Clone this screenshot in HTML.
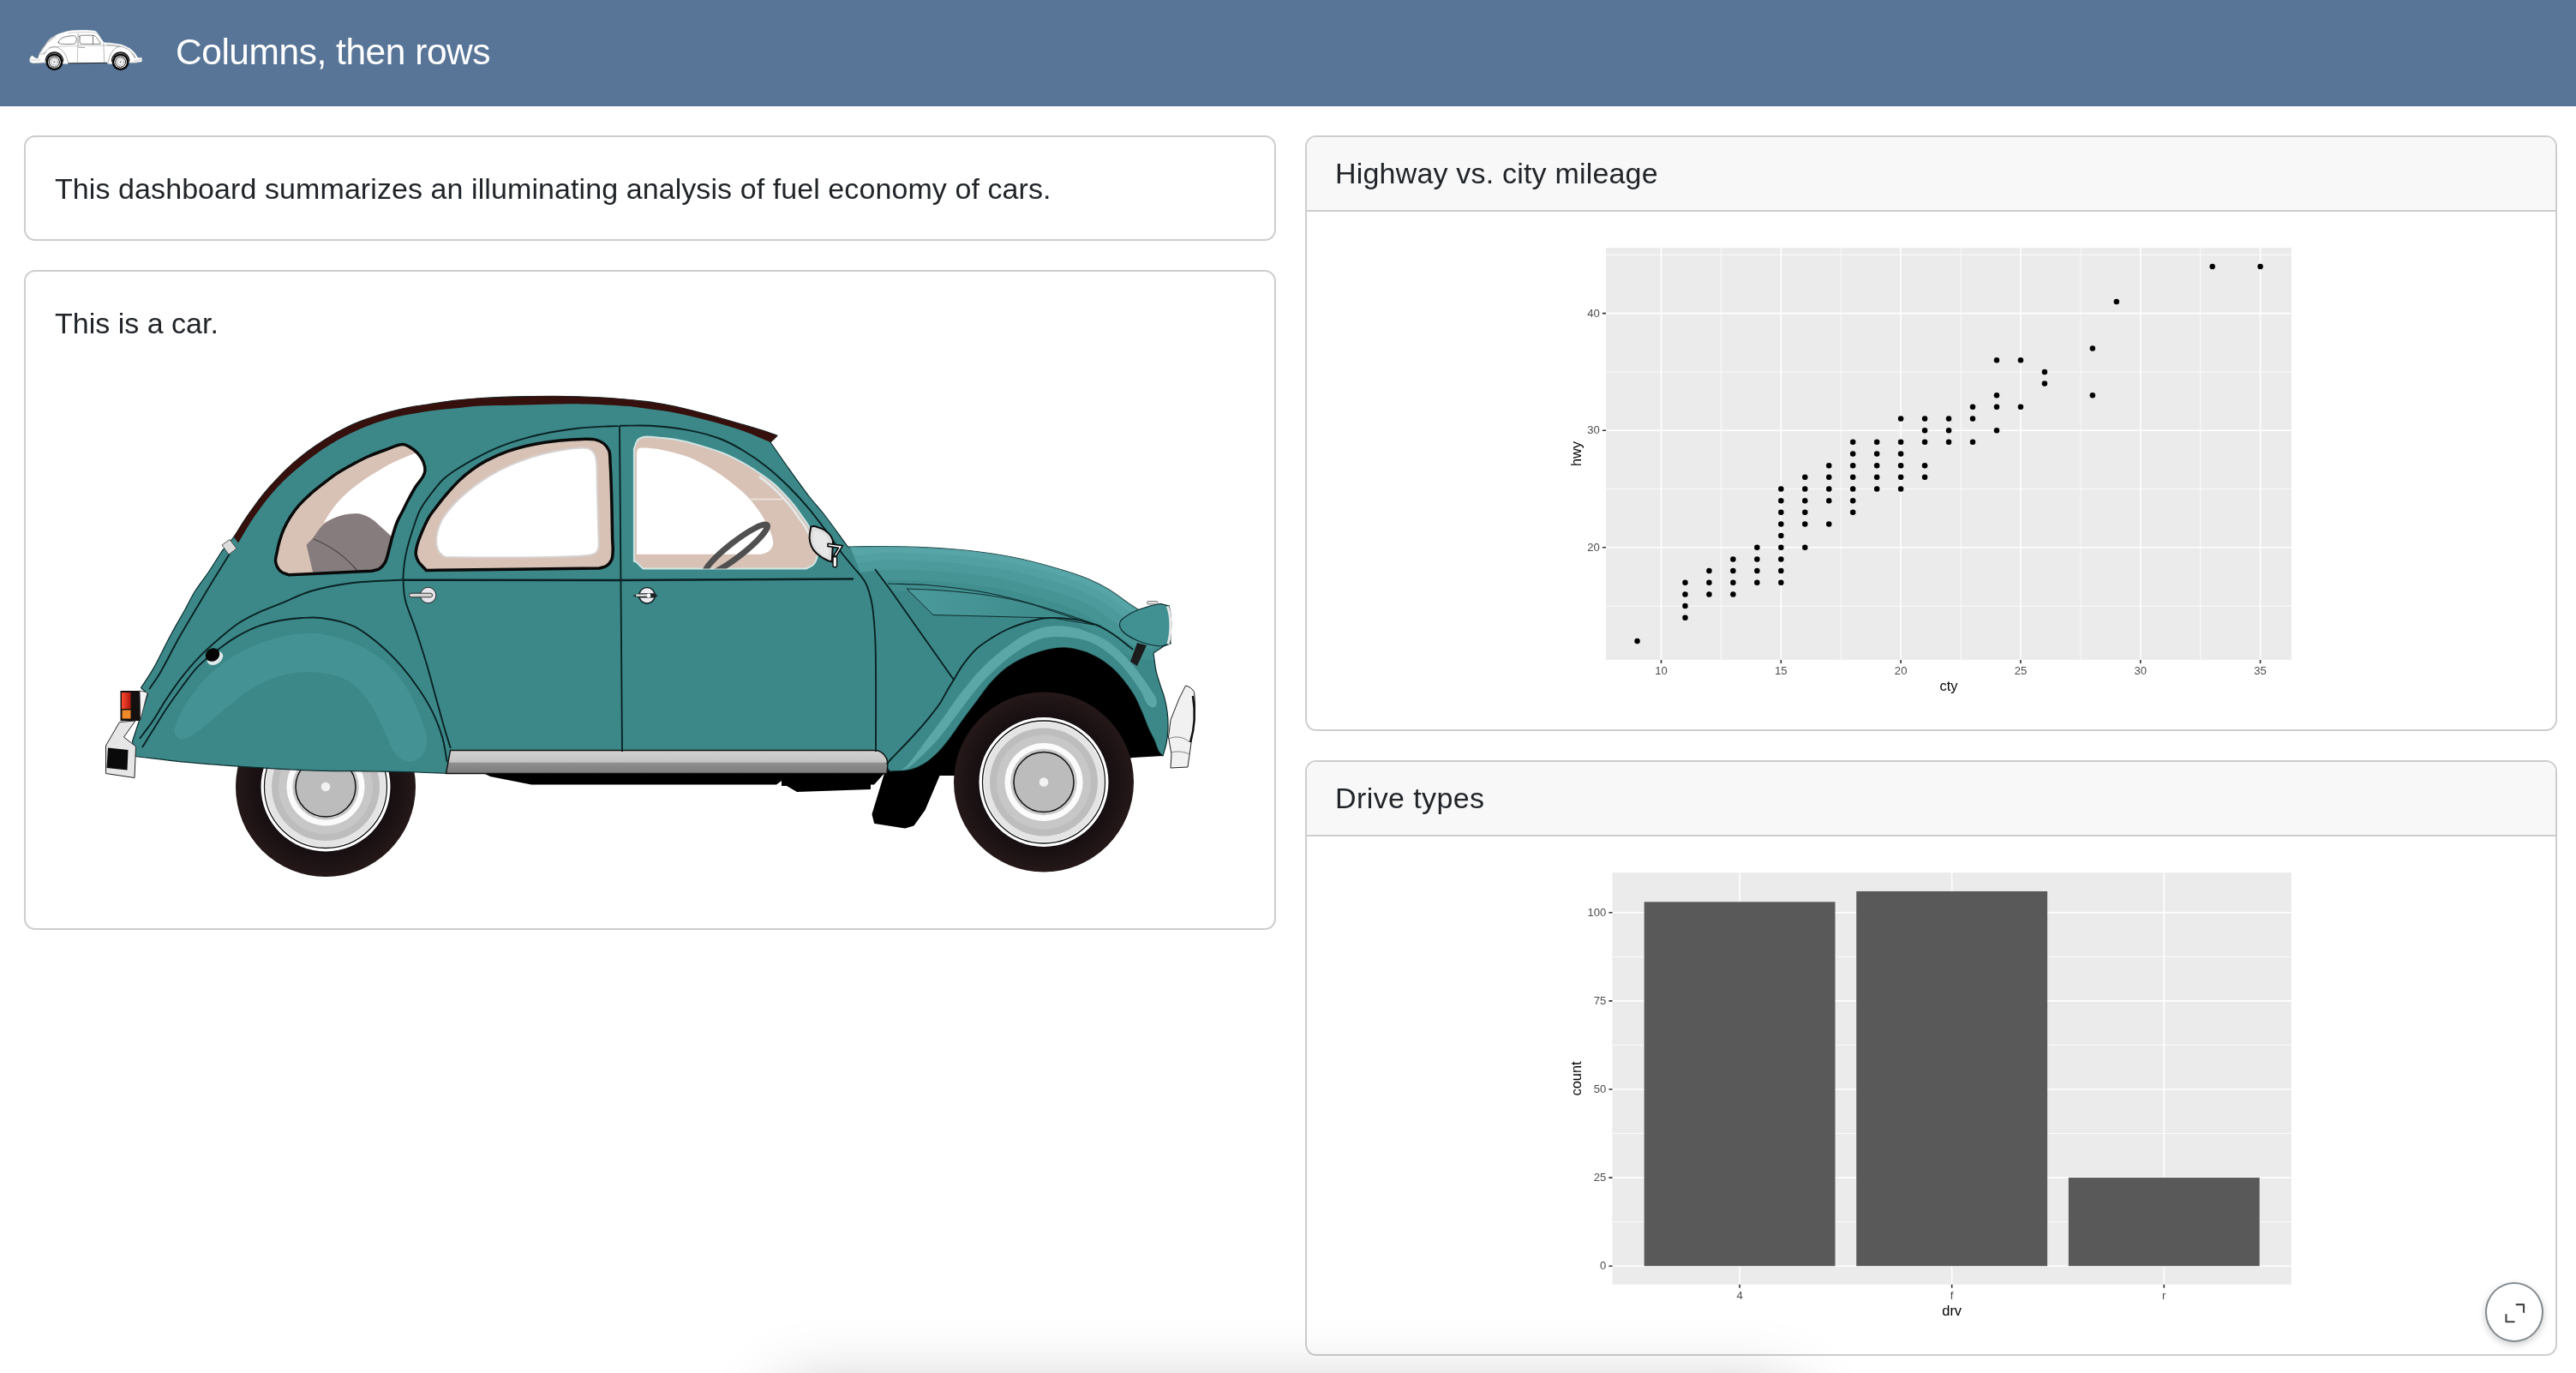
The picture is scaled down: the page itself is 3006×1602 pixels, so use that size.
<!DOCTYPE html>
<html lang="en">
<head>
<meta charset="utf-8">
<title>Columns, then rows</title>
<style>
html,body{margin:0;padding:0;}
body{width:3006px;height:1602px;overflow:hidden;background:#fff;position:relative;font-family:"Liberation Sans",sans-serif;color:#212529;}
#nav{position:absolute;left:0;top:0;width:3006px;height:123.6px;background:#587597;box-shadow:inset 0 -1px 0 #4e6d93;}
#logo{position:absolute;left:24px;top:24px;}
#title{position:absolute;left:204.5px;top:34.5px;font-size:42.5px;line-height:52px;color:#fff;white-space:nowrap;letter-spacing:-0.47px;}
.card{position:absolute;box-sizing:border-box;border:2px solid #cdcdcd;border-radius:13px;background:#fff;overflow:hidden;}
.card p{margin:0;position:absolute;white-space:nowrap;font-size:34px;line-height:40px;}
#c1{left:28px;top:158px;width:1461px;height:123px;}
#c2{left:28px;top:315px;width:1461px;height:770px;}
#c3{left:1523px;top:158px;width:1461px;height:695px;}
#c4{left:1523px;top:887px;width:1461px;height:695px;}
#t1{left:34px;top:40px;letter-spacing:0.08px;}
#t2{left:34px;top:40px;}
.card-header{position:absolute;left:0;top:0;right:0;height:85px;background:#f8f8f8;border-bottom:2px solid #cdcdcd;}
.card-header span{position:absolute;left:33px;top:22px;font-size:34px;line-height:40px;white-space:nowrap;}
#t3{letter-spacing:0.19px;}
#t4{letter-spacing:0.4px;}
#car{position:absolute;left:100px;top:440px;}
#plots{position:absolute;left:1800px;top:260px;}
#expand{position:absolute;left:2899.75px;top:1496.1px;width:64.5px;height:65.8px;border:2px solid #82898e;border-radius:50%;background:#fff;box-shadow:0 3px 9px rgba(0,0,0,.2);}
#expand svg{position:absolute;left:0;top:0;}
#shadow{position:absolute;left:915px;top:1628px;width:1176px;height:80px;box-shadow:0 0 80px 6px rgba(0,0,0,.26);border-radius:24px;}

#plots,#title,#t1,#t2,#t3,#t4{will-change:transform;}

</style>
</head>
<body>
<header id="nav">
<svg id="logo" viewBox="0 0 160 80" width="160" height="80">
<g transform="scale(0.06211)" stroke-linejoin="round" stroke-linecap="round">
<path d="M165 745C171.7 726.7 175.6 704.8 185 690C193 677.4 204 661.5 215 660C225.7 658.6 239.6 672.6 250 680C259.4 686.7 264.1 697 275 702C289.1 708.5 311.7 707.3 330 710C335 686.7 335.6 664.3 345 640C356.6 609.9 381.6 574.5 400 545C416.6 518.2 433.1 494.4 450 470C466.5 446.1 480.9 422.6 500 400C520.5 375.8 544.7 350.2 570 330C594.7 310.3 623.9 294.6 650 280C673.8 266.7 695.5 254.9 720 245C745.4 234.8 771.7 227.9 800 220C831.4 211.2 866.5 201.3 900 195C933.2 188.7 966.6 185.2 1000 182C1033.3 178.8 1066.7 177 1100 176C1133.3 175 1166.7 175.3 1200 176C1233.3 176.7 1268.6 177.4 1300 180C1328.2 182.3 1358.2 184.6 1380 190C1395.9 193.9 1408.5 196.9 1420 205C1432 213.4 1439.7 226.4 1450 240C1462.9 257 1476.7 280 1490 300C1503.3 320 1517.4 342.2 1530 360C1540.5 374.8 1548.6 391.3 1560 400C1569.1 407 1578 409.4 1590 412C1606.3 415.6 1627.5 413.3 1650 415C1679.1 417.2 1716.7 420.8 1750 425C1783.4 429.2 1816.9 432.6 1850 440C1883.6 447.5 1917.2 457 1950 470C1983.9 483.5 2020.7 500.5 2050 520C2076.6 537.7 2099.4 559.1 2120 580C2139 599.2 2156.1 620.4 2170 640C2182 657 2190 673.3 2200 690C2210 694 2219.2 701.5 2230 702C2242.3 702.5 2256.7 694 2270 690C2275 706.7 2284.1 725.4 2285 740C2285.7 751.2 2281.7 760 2280 770C2253.3 776.7 2226.9 785.7 2200 790C2173.5 794.3 2144.8 795.9 2120 796C2098.6 796.1 2080 793.3 2060 792C1928.3 800.7 1796.7 809.3 1665 818C1656.7 816 1647.4 816.1 1640 812C1632.3 807.7 1626.7 798.7 1620 792C1381.7 794.7 1143.3 797.3 905 800C898.3 806 891.7 812 885 818C740 809.3 595 800.7 450 792C433.3 793.3 421.1 794.4 400 796C363.4 798.7 290.3 810.3 250 806C222 803 203.3 792.7 180 786C175 772.3 170 758.7 165 745Z" fill="#fff" stroke="#9aa" stroke-width="5"/>
<path d="M905 803L1620 795" stroke="#111" stroke-width="14" fill="none"/>
<path d="M250 800L440 790M2080 792L2230 782" stroke="#999" stroke-width="10" fill="none"/>
<path d="M460 760A175 175 0 0 1 810 760L795 775A160 160 0 0 0 475 775Z" fill="#222"/>
<path d="M1703 760A175 175 0 0 1 2053 760L2038 775A160 160 0 0 0 1718 775Z" fill="#222"/>
<path d="M710 412C709.3 397.5 737.6 358.2 760 340C783.6 320.8 818.6 310.8 850 302C881.9 293 919.6 288.6 950 287C975.3 285.7 1003.6 281.9 1020 290C1032.2 296 1039.9 307.7 1045 320C1050.9 334.2 1052.2 354.6 1050 372C1047.7 390.6 1044.1 416.2 1030 428C1013.5 441.7 980.9 438.5 950 441C907.9 444.4 841.7 445 800 441C769.6 438.1 736.1 434.2 722 426C715.2 422.1 710.3 418.7 710 412Z" fill="#fff" stroke="#222" stroke-width="9"/>
<path d="M1112 300C1118 292.3 1124 284.7 1130 277C1206.7 277 1283.3 277 1360 277C1373.3 281.3 1387.1 281.3 1400 290C1417.5 301.9 1433.7 328.9 1450 350C1467.1 372.1 1483.3 396.7 1500 420C1500 427 1500 434 1500 441C1377.3 441 1254.7 441 1132 441C1125.3 427.3 1118.7 413.7 1112 400C1112 366.7 1112 333.3 1112 300Z" fill="#fff" stroke="#222" stroke-width="9"/>
<path d="M1360 280V440" stroke="#222" stroke-width="10" fill="none"/>
<path d="M1078 245L1068 800M1095 250L1088 470" stroke="#777" stroke-width="7" fill="none"/>
<path d="M1560 420L1572 780" stroke="#555" stroke-width="7" fill="none"/>
<path d="M1090 502L1200 507" stroke="#666" stroke-width="10" fill="none"/>
<path d="M540 505C700 485 900 478 1070 478M1095 472L1560 470C1650 470 1750 475 1830 490" stroke="#777" stroke-width="6" fill="none"/>
<path d="M900 240C1000 215 1200 210 1380 225L1440 250" stroke="#888" stroke-width="6" fill="none"/>
<path d="M430 640C470 560 540 505 620 495C710 490 790 550 840 640C870 700 890 760 898 812" stroke="#444" stroke-width="7" fill="none"/>
<path d="M1640 805C1650 720 1690 620 1750 550C1790 510 1830 490 1870 485M1620 455C1750 455 1900 480 2000 530C2080 580 2130 640 2160 700" stroke="#444" stroke-width="7" fill="none"/>
<path d="M640 290L370 545M660 300L520 400M500 410L380 600M350 640L480 600" stroke="#777" stroke-width="7" fill="none"/>
<path d="M2085 610C2110 630 2135 670 2140 700" stroke="#555" stroke-width="8" fill="none"/>
<path d="M190 745L370 740M2140 750L2275 735" stroke="#888" stroke-width="7" fill="none"/>
<circle cx="635" cy="778" r="160" fill="#050505"/>
<circle cx="635" cy="778" r="119" fill="#f4f4f4"/>
<circle cx="635" cy="778" r="97" fill="none" stroke="#111" stroke-width="15"/>
<circle cx="635" cy="778" r="62" fill="none" stroke="#555" stroke-width="6"/>
<circle cx="635" cy="778" r="14" fill="#666"/>
<circle cx="1878" cy="778" r="160" fill="#050505"/>
<circle cx="1878" cy="778" r="119" fill="#f4f4f4"/>
<circle cx="1878" cy="778" r="97" fill="none" stroke="#111" stroke-width="15"/>
<circle cx="1878" cy="778" r="62" fill="none" stroke="#555" stroke-width="6"/>
<circle cx="1878" cy="778" r="14" fill="#666"/>
</g>
</svg>
<div id="title">Columns, then rows</div>
</header>
<main>
<section class="card" id="c1"><p id="t1">This dashboard summarizes an illuminating analysis of fuel economy of cars.</p></section>
<section class="card" id="c2"><p id="t2">This is a car.</p></section>
<section class="card" id="c3"><div class="card-header"><span id="t3">Highway vs. city mileage</span></div></section>
<section class="card" id="c4"><div class="card-header"><span id="t4">Drive types</span></div></section>
<svg id="car" viewBox="100 440 1320 600" width="1320" height="600">
<defs>
<linearGradient id="gsill" x1="0" y1="0" x2="0" y2="1"><stop offset="0" stop-color="#d2d2d2"/><stop offset="0.5" stop-color="#c4c4c4"/><stop offset="0.56" stop-color="#8e8e8e"/><stop offset="1" stop-color="#7c7c7c"/></linearGradient>
<linearGradient id="gtail" x1="0" y1="0" x2="1" y2="0"><stop offset="0" stop-color="#ff4a30"/><stop offset="1" stop-color="#b01810"/></linearGradient>
<g id="hub">
<circle r="75.500" fill="#fff"/>
<circle r="71.500" fill="none" stroke="#111" stroke-width="1.300"/>
<circle r="70" fill="#e4e4e4"/>
<circle r="63" fill="#bdbdbd"/>
<circle r="55" fill="#c7c7c7"/>
<circle r="45.500" fill="#fbfbfb"/>
<circle r="38.800" fill="#c9c9c9"/>
<circle r="35" fill="#bcbcbc" stroke="#111" stroke-width="1.500"/>
<circle r="5.300" fill="#f2f2f2"/>
</g>
<radialGradient id="gtire"><stop offset="0.7" stop-color="#150e10"/><stop offset="1" stop-color="#251819"/></radialGradient>
<linearGradient id="gpan" x1="0" y1="0" x2="1" y2="0"><stop offset="0" stop-color="#4b9a9b"/><stop offset="1" stop-color="#3b8788"/></linearGradient>
</defs>
<circle cx="380" cy="918" r="105" fill="url(#gtire)"/>
<use href="#hub" x="380" y="918"/>
<path d="M560 900H1034L1020 915.500H1016V921L930 924L918 917H912V911L906 915.500H620L572 906Z" fill="#000"/>
<path d="M1034 899L1098 899L1078.500 945L1066 962.500L1056 965.500L1021 960L1018.500 950Z" fill="#000" stroke="#000" stroke-width="2" stroke-linejoin="round"/>
<path d="M259 643C263.6 637.5 268.5 632.4 272.8 626.5C277.2 620.5 280.9 613.5 285 607.3C289 601.3 293.1 595.4 297.3 589.8C301.3 584.4 305.2 579.2 309.5 574C313.9 568.7 318.9 563.2 323.5 558.4C327.7 554 331.4 550.1 335.7 546.1C340.1 541.9 344.7 537.9 349.7 533.9C355.1 529.5 361.3 524.9 367.2 520.8C373 516.8 378.8 512.9 384.7 509.4C390.4 505.9 396.2 502.7 402.1 499.8C407.9 496.9 413.7 494.2 419.6 491.9C425.4 489.6 431.2 487.7 437.1 485.8C442.9 483.9 448.4 482.3 454.6 480.6C461.6 478.7 469.7 476.8 477.3 475.3C484.8 473.8 491.9 473 500 471.8C509.3 470.4 519.8 468.5 530 467.3C540.5 466.1 550.1 465.2 562 464.5C576.8 463.6 595.3 463 612 462.7C628.7 462.4 645.3 462.2 662 462.5C678.7 462.8 695.9 463.4 712 464.5C727.1 465.5 742.6 466.9 756 468.7C767.3 470.2 776.1 471.7 787 474C799.5 476.6 813.7 480.4 827 484C840.4 487.6 855 491.9 867 495.4C876.9 498.3 886.7 501.1 894 503.6C899.1 505.3 902.7 506.8 907 508.4L899 516C906.2 526.3 913.1 536.5 920.5 546.8C928.1 557.5 936.6 569.5 944 579C950.1 586.9 955.1 591.9 961.5 600C969.9 610.7 980.1 625.3 989.4 638C1003.3 637.8 1016.5 637.4 1031 637.5C1046.9 637.6 1064.3 637.9 1081 638.8C1097.7 639.6 1114.4 640.6 1131 642.5C1147.7 644.4 1164.4 646.7 1181 650C1197.7 653.3 1215.6 658 1231 662.5C1244.5 666.4 1257.4 670.4 1268.5 675C1277.8 678.9 1285.3 682.6 1293.5 687.5C1302 692.6 1311.4 700.2 1318.5 705C1323.7 708.5 1327.5 711 1332 714L1354 704.500L1364 707L1366 751L1358 754L1346 762C1347 769 1347.7 776.5 1349.1 782.9C1350.3 788.6 1352.1 793.4 1353.7 798.6C1355.3 803.9 1357.5 809 1358.9 814.4C1360.3 819.9 1361.5 825.5 1362.2 831.4C1362.9 837.7 1363.2 844.8 1362.9 851.1C1362.7 857 1362 862.8 1360.9 868.1C1359.9 873 1358.3 877.4 1357 882C1355.5 880.4 1353.8 879.4 1352.4 877.3C1350.3 874.2 1349 868.5 1347.1 864.2C1345.1 859.8 1342.8 856 1340.6 851.1C1338 845.2 1335.5 837.9 1332.7 831.4C1329.8 824.8 1327.1 817.9 1323.5 811.7C1320 805.7 1315.9 800 1311.7 794.7C1307.6 789.6 1303.4 784.7 1298.6 780.3C1293.8 775.9 1288.4 771.8 1282.9 768.5C1277.5 765.3 1271.9 762.7 1265.9 760.6C1259.7 758.5 1252.7 756.6 1246.2 756C1240.1 755.5 1234 756.1 1228 757C1222 757.9 1216.4 759.5 1210.4 761.5C1203.9 763.6 1197.1 766.2 1190.7 769.5C1184 772.9 1177 777.1 1171.1 781.9C1165.3 786.6 1160.4 791.9 1155.3 797.7C1149.8 804 1144.8 811.6 1139.6 818.6C1134.4 825.6 1129.1 832.5 1123.9 839.6C1118.6 846.9 1113.3 855.2 1108.2 861.9C1103.7 867.7 1099.8 872.8 1095 877.6C1090.2 882.4 1085 887.2 1079.3 890.7C1073.7 894.2 1067.6 897 1061 898.6C1054 900.3 1046 899.5 1038.5 900L1030 890H527L522 902.500C510.3 902 499.7 901.4 487 901C471.8 900.5 455.4 900.3 437 900C414.5 899.6 388 899.7 362 898.8C333.9 897.7 301.2 895.6 274.5 893.8C251.9 892.2 232.1 890.7 212 888.8C193.3 886.9 176 884.6 158 882.5L154.500 865C160.5 846.7 166.5 828.3 172.5 810C169.8 807.5 167.2 805.1 164.5 802.6C169.3 795.1 173.9 788.8 178.9 780.1C185.4 768.8 193.1 752.1 199.7 740C205.2 729.8 210.6 720.8 215.5 712C219.8 704.2 222.9 697.2 227.4 690C232 682.5 237.9 675.6 243 668C248.4 660 253.7 651.3 259 643Z" fill="#3c8889" stroke="#0d2d2f" stroke-width="1.200" stroke-linejoin="round"/>
<path d="M272.8 626.5C276.9 620.1 280.9 613.5 285 607.3C289 601.3 293.1 595.4 297.3 589.8C301.3 584.4 305.2 579.2 309.5 574C313.9 568.7 318.9 563.2 323.5 558.4C327.7 554 331.4 550.1 335.7 546.1C340.1 541.9 344.7 537.9 349.7 533.9C355.1 529.5 361.3 524.9 367.2 520.8C373 516.8 378.8 512.9 384.7 509.4C390.4 505.9 396.2 502.7 402.1 499.8C407.9 496.9 413.7 494.2 419.6 491.9C425.4 489.6 431.2 487.7 437.1 485.8C442.9 483.9 448.4 482.3 454.6 480.6C461.6 478.7 469.7 476.8 477.3 475.3C484.8 473.8 491.9 473 500 471.8C509.3 470.4 519.8 468.5 530 467.3C540.5 466.1 550.1 465.2 562 464.5C576.8 463.6 595.3 463 612 462.7C628.7 462.4 645.3 462.2 662 462.5C678.7 462.8 695.9 463.4 712 464.5C727.1 465.5 742.6 466.9 756 468.7C767.3 470.2 776.1 471.7 787 474C799.5 476.6 813.7 480.4 827 484C840.4 487.6 855 491.9 867 495.4C876.9 498.3 886.7 501.1 894 503.6C899.1 505.3 902.7 506.8 907 508.4L899 516C888.3 511.6 878.4 506.9 867 502.8C854.5 498.3 840.4 494.3 827 490.7C813.7 487.2 799.5 483.7 787 481.4C776.1 479.4 765.5 478.3 756 477C747.9 475.9 742.6 474.8 733.5 474C719.5 472.7 696.5 471.7 680 471.4C665.7 471.1 653.3 471.6 640 471.8C626.7 472 613.2 472.4 600 472.7C587.2 473 574.1 472.8 562 473.5C550.9 474.1 540.5 475.4 530 476.5C519.8 477.5 511 478.1 500 479.7C486.4 481.7 468.6 484.6 454.6 488.4C442 491.8 431.1 495.7 419.6 500.7C407.8 505.8 396.1 511.9 384.7 519C372.8 526.4 360.3 535.7 349.7 544.4C340.1 552.3 331.9 559.7 323.5 568.8C314.4 578.7 305.1 590.8 297.3 602C290 612.4 284.4 623 278 633.5Z" fill="#36100c"/>
<clipPath id="cb"><path d="M259 643C263.6 637.5 268.5 632.4 272.8 626.5C277.2 620.5 280.9 613.5 285 607.3C289 601.3 293.1 595.4 297.3 589.8C301.3 584.4 305.2 579.2 309.5 574C313.9 568.7 318.9 563.2 323.5 558.4C327.7 554 331.4 550.1 335.7 546.1C340.1 541.9 344.7 537.9 349.7 533.9C355.1 529.5 361.3 524.9 367.2 520.8C373 516.8 378.8 512.9 384.7 509.4C390.4 505.9 396.2 502.7 402.1 499.8C407.9 496.9 413.7 494.2 419.6 491.9C425.4 489.6 431.2 487.7 437.1 485.8C442.9 483.9 448.4 482.3 454.6 480.6C461.6 478.7 469.7 476.8 477.3 475.3C484.8 473.8 491.9 473 500 471.8C509.3 470.4 519.8 468.5 530 467.3C540.5 466.1 550.1 465.2 562 464.5C576.8 463.6 595.3 463 612 462.7C628.7 462.4 645.3 462.2 662 462.5C678.7 462.8 695.9 463.4 712 464.5C727.1 465.5 742.6 466.9 756 468.7C767.3 470.2 776.1 471.7 787 474C799.5 476.6 813.7 480.4 827 484C840.4 487.6 855 491.9 867 495.4C876.9 498.3 886.7 501.1 894 503.6C899.1 505.3 902.7 506.8 907 508.4L899 516C906.2 526.3 913.1 536.5 920.5 546.8C928.1 557.5 936.6 569.5 944 579C950.1 586.9 955.1 591.9 961.5 600C969.9 610.7 980.1 625.3 989.4 638C1003.3 637.8 1016.5 637.4 1031 637.5C1046.9 637.6 1064.3 637.9 1081 638.8C1097.7 639.6 1114.4 640.6 1131 642.5C1147.7 644.4 1164.4 646.7 1181 650C1197.7 653.3 1215.6 658 1231 662.5C1244.5 666.4 1257.4 670.4 1268.5 675C1277.8 678.9 1285.3 682.6 1293.5 687.5C1302 692.6 1311.4 700.2 1318.5 705C1323.7 708.5 1327.5 711 1332 714L1354 704.500L1364 707L1366 751L1358 754L1346 762C1347 769 1347.7 776.5 1349.1 782.9C1350.3 788.6 1352.1 793.4 1353.7 798.6C1355.3 803.9 1357.5 809 1358.9 814.4C1360.3 819.9 1361.5 825.5 1362.2 831.4C1362.9 837.7 1363.2 844.8 1362.9 851.1C1362.7 857 1362 862.8 1360.9 868.1C1359.9 873 1358.3 877.4 1357 882C1355.5 880.4 1353.8 879.4 1352.4 877.3C1350.3 874.2 1349 868.5 1347.1 864.2C1345.1 859.8 1342.8 856 1340.6 851.1C1338 845.2 1335.5 837.9 1332.7 831.4C1329.8 824.8 1327.1 817.9 1323.5 811.7C1320 805.7 1315.9 800 1311.7 794.7C1307.6 789.6 1303.4 784.7 1298.6 780.3C1293.8 775.9 1288.4 771.8 1282.9 768.5C1277.5 765.3 1271.9 762.7 1265.9 760.6C1259.7 758.5 1252.7 756.6 1246.2 756C1240.1 755.5 1234 756.1 1228 757C1222 757.9 1216.4 759.5 1210.4 761.5C1203.9 763.6 1197.1 766.2 1190.7 769.5C1184 772.9 1177 777.1 1171.1 781.9C1165.3 786.6 1160.4 791.9 1155.3 797.7C1149.8 804 1144.8 811.6 1139.6 818.6C1134.4 825.6 1129.1 832.5 1123.9 839.6C1118.6 846.9 1113.3 855.2 1108.2 861.9C1103.7 867.7 1099.8 872.8 1095 877.6C1090.2 882.4 1085 887.2 1079.3 890.7C1073.7 894.2 1067.6 897 1061 898.6C1054 900.3 1046 899.5 1038.5 900L1030 890H527L522 902.500C510.3 902 499.7 901.4 487 901C471.8 900.5 455.4 900.3 437 900C414.5 899.6 388 899.7 362 898.8C333.9 897.7 301.2 895.6 274.5 893.8C251.9 892.2 232.1 890.7 212 888.8C193.3 886.9 176 884.6 158 882.5L154.500 865C160.5 846.7 166.5 828.3 172.5 810C169.8 807.5 167.2 805.1 164.5 802.6C169.3 795.1 173.9 788.8 178.9 780.1C185.4 768.8 193.1 752.1 199.7 740C205.2 729.8 210.6 720.8 215.5 712C219.8 704.2 222.9 697.2 227.4 690C232 682.5 237.9 675.6 243 668C248.4 660 253.7 651.3 259 643Z"/></clipPath>
<clipPath id="ch"><path d="M989 630L1400 600V800H1118L1022 666L1004 668Z"/></clipPath>
<g clip-path="url(#cb)"><g clip-path="url(#ch)" fill="none" stroke="#74c2c3" stroke-linecap="round">
<path d="M975 622C980.3 627.8 983.5 636.4 991 639.5C1000.7 643.5 1016.9 637.7 1031 637.5C1046.7 637.3 1064.3 637.9 1081 638.8C1097.7 639.6 1114.4 640.6 1131 642.5C1147.7 644.4 1164.4 646.7 1181 650C1197.7 653.3 1215.6 658 1231 662.5C1244.5 666.4 1257.4 670.4 1268.5 675C1277.8 678.9 1285.3 682.6 1293.5 687.5C1302 692.6 1310.4 699.7 1318.5 705C1325.9 709.8 1332.8 713.7 1340 718" stroke-width="104" opacity="0.1"/>
<path d="M975 622C980.3 627.8 983.5 636.4 991 639.5C1000.7 643.5 1016.9 637.7 1031 637.5C1046.7 637.3 1064.3 637.9 1081 638.8C1097.7 639.6 1114.4 640.6 1131 642.5C1147.7 644.4 1164.4 646.7 1181 650C1197.7 653.3 1215.6 658 1231 662.5C1244.5 666.4 1257.4 670.4 1268.5 675C1277.8 678.9 1285.3 682.6 1293.5 687.5C1302 692.6 1310.4 699.7 1318.5 705C1325.9 709.8 1332.8 713.7 1340 718" stroke-width="78" opacity="0.12"/>
<path d="M975 622C980.3 627.8 983.5 636.4 991 639.5C1000.7 643.5 1016.9 637.7 1031 637.5C1046.7 637.3 1064.3 637.9 1081 638.8C1097.7 639.6 1114.4 640.6 1131 642.5C1147.7 644.4 1164.4 646.7 1181 650C1197.7 653.3 1215.6 658 1231 662.5C1244.5 666.4 1257.4 670.4 1268.5 675C1277.8 678.9 1285.3 682.6 1293.5 687.5C1302 692.6 1310.4 699.7 1318.5 705C1325.9 709.8 1332.8 713.7 1340 718" stroke-width="54" opacity="0.14"/>
<path d="M975 622C980.3 627.8 983.5 636.4 991 639.5C1000.7 643.5 1016.9 637.7 1031 637.5C1046.7 637.3 1064.3 637.9 1081 638.8C1097.7 639.6 1114.4 640.6 1131 642.5C1147.7 644.4 1164.4 646.7 1181 650C1197.7 653.3 1215.6 658 1231 662.5C1244.5 666.4 1257.4 670.4 1268.5 675C1277.8 678.9 1285.3 682.6 1293.5 687.5C1302 692.6 1310.4 699.7 1318.5 705C1325.9 709.8 1332.8 713.7 1340 718" stroke-width="32" opacity="0.16"/>
<path d="M975 622C980.3 627.8 983.5 636.4 991 639.5C1000.7 643.5 1016.9 637.7 1031 637.5C1046.7 637.3 1064.3 637.9 1081 638.8C1097.7 639.6 1114.4 640.6 1131 642.5C1147.7 644.4 1164.4 646.7 1181 650C1197.7 653.3 1215.6 658 1231 662.5C1244.5 666.4 1257.4 670.4 1268.5 675C1277.8 678.9 1285.3 682.6 1293.5 687.5C1302 692.6 1310.4 699.7 1318.5 705C1325.9 709.8 1332.8 713.7 1340 718" stroke-width="14" opacity="0.16"/>
</g></g>
<path d="M1058 687C1072 687.7 1085 687.8 1100 689C1117.3 690.3 1138.5 692.3 1156 695C1171.6 697.4 1186.7 700.5 1200 704C1211.3 707 1219.7 710.3 1231 714C1244.6 718.5 1261 724 1276 729L1228 721L1089 717.500Z" fill="url(#gpan)" stroke="#0d2d2f" stroke-width="1"/>
<path d="M1036 681C1051 681.5 1064.1 681.1 1081 682.5C1102.9 684.3 1131.2 687.6 1156 692.5C1181.2 697.5 1208.2 705.6 1231 712.5C1250.6 718.5 1267 724.8 1285 731" fill="none" stroke="#0d2d2f" stroke-width="1.200"/>
<path d="M204.5 847.5C206.7 838.8 215.7 821.9 224.5 810C234.3 796.7 247.7 782.8 262 772.5C276.7 761.9 294.9 753.1 312 747.5C328.3 742.1 345.4 738.4 362 738.8C378.7 739.2 397 744 412 750C425.9 755.6 438.9 763.4 449.5 772.5C459.5 781.1 467.5 791.4 474.5 802.5C481.7 813.9 488 828.6 492 840C495.2 849 498.6 857.5 498.2 865C497.9 871.4 495.8 878.5 492 882.5C488.5 886.2 481.9 889.1 477 888.8C471.9 888.4 466.4 884.7 462 880C455.9 873.5 452.3 860.2 447 850C441.5 839.3 436.5 826.9 429.5 817.5C423 808.8 416 800.4 407 795C397.7 789.4 385.9 786.5 374.5 785C362.6 783.4 349.3 783.9 337 786.2C324.3 788.7 311.6 793.5 299.5 800C286.5 807 273.7 818.4 262 827.5C251.3 835.9 241.3 846.4 232 852.5C224.9 857.1 217 862.8 212 862.5C208.8 862.3 205.8 859.9 204.5 857.5C203.1 855 203.4 851.7 204.5 847.5Z" fill="#449293"/>
<path d="M1050 899C1052.3 897.6 1054.2 897.2 1057 894.7C1063.4 889 1075.2 871.2 1083.3 860.6C1090.3 851.3 1096.8 842.8 1102.9 834.4C1108.5 826.7 1113.2 819.2 1118.6 812.1C1123.8 805.2 1128.9 798.7 1134.4 792.4C1139.9 786.1 1145.3 779.9 1151.4 774.1C1157.6 768.2 1164.1 762.9 1171.1 757.5C1178.6 751.8 1186.7 745.4 1195 741C1203 736.8 1211.4 733.2 1220 731.5C1228.5 729.9 1237.5 729.9 1246.2 731C1255 732.1 1264.3 735.2 1272.4 738.3C1279.9 741.2 1286.9 744.5 1293.4 748.8C1300 753.2 1306 758.9 1311.7 764.6C1317.4 770.3 1322.6 776.7 1327.5 782.9C1332.2 788.9 1336.8 795.3 1340.6 801.3C1344 806.7 1348.8 812.7 1349.7 817C1350.3 819.7 1349.2 821.7 1349 824L1344.5 825.5C1342.8 824.4 1341 824 1339.3 822.2C1336.5 819.1 1334.5 811.7 1331.4 806.5C1328 800.8 1323.9 795.1 1319.6 789.5C1315.2 783.7 1310.4 777.7 1305.2 772.4C1300 767.2 1294.2 762.1 1288.2 758C1282.4 754.1 1276.5 750.6 1269.8 748.2C1262.6 745.6 1254.3 744.2 1246.2 743.5C1237.7 742.7 1227.6 742.6 1220 744C1213.8 745.2 1209.5 747.2 1203.8 750C1196.8 753.5 1188.5 758.9 1181.5 764C1174.6 769.1 1168.1 774.9 1161.9 780.6C1155.9 786.1 1150.2 791.6 1144.8 797.7C1139.3 803.9 1134.3 810.6 1129.1 817.3C1123.8 824.1 1118.9 831.1 1113.4 838.3C1107.5 846 1102.1 853.9 1095 861.9C1086.7 871.3 1073 884.7 1066.2 890.7C1062.8 893.7 1060.7 894.9 1058 897Z" fill="#5ba7a8"/>
<path d="M1357 882C1355.5 880.4 1353.8 879.4 1352.4 877.3C1350.3 874.2 1349 868.5 1347.1 864.2C1345.1 859.8 1342.8 856 1340.6 851.1C1338 845.2 1335.5 837.9 1332.7 831.4C1329.8 824.8 1327.1 817.9 1323.5 811.7C1320 805.7 1315.9 800 1311.7 794.7C1307.6 789.6 1303.4 784.7 1298.6 780.3C1293.8 775.9 1288.4 771.8 1282.9 768.5C1277.5 765.3 1271.9 762.7 1265.9 760.6C1259.7 758.5 1252.7 756.6 1246.2 756C1240.1 755.5 1234 756.1 1228 757C1222 757.9 1216.4 759.5 1210.4 761.5C1203.9 763.6 1197.1 766.2 1190.7 769.5C1184 772.9 1177 777.1 1171.1 781.9C1165.3 786.6 1160.4 791.9 1155.3 797.7C1149.8 804 1144.8 811.6 1139.6 818.6C1134.4 825.6 1129.1 832.5 1123.9 839.6C1118.6 846.9 1113.3 855.2 1108.2 861.9C1103.7 867.7 1099.8 872.8 1095 877.6C1090.2 882.4 1085 887.2 1079.3 890.7C1073.7 894.2 1067.6 897 1061 898.6C1054 900.3 1046 899.5 1038.5 900L1095 905L1218 905L1322 884Z" fill="#000"/>
<circle cx="1218" cy="912.500" r="105" fill="url(#gtire)"/>
<use href="#hub" x="1218" y="912.500"/>
<path d="M525.500 875.500H1022C1030 876.500 1035 883 1036 890L1035 902.500H520.500Z" fill="url(#gsill)" stroke="#111" stroke-width="1.400"/>
<clipPath id="cq"><path d="M449.5 525C456.2 522.6 464.7 518.4 470 518.5C473.4 518.6 475.5 520.1 478.2 521.6C481.3 523.3 484.7 525.9 487.3 528.7C490 531.6 492.6 535.4 494 538.9C495.3 542.2 496.2 546 496 549.1C495.8 551.7 494.8 553.7 493.5 556.3C491.7 559.7 488 563.3 485.3 567.5C482.2 572.3 478.8 578.7 476.1 583.8C473.8 588.1 472.1 591.9 470 596C467.8 600.3 465.3 604.3 463.4 609C461.3 614.1 459.5 620.4 458 625.6C456.7 630.2 455.9 634 454.6 638.7C453.1 644.1 451.8 651.8 449.4 656.2C447.6 659.4 445.6 661.8 443 663.5C440.4 665.2 436.7 665.3 433.6 666.2C401.6 667.7 369.5 669.3 337.5 670.8C334.3 669.5 330.6 669.2 328 667C325.1 664.5 322.5 660 321.7 656C320.9 652 322.7 647.3 323.5 643C324.3 638.6 325.3 634.3 326.6 630C327.9 625.6 329.5 621.1 331.4 616.8C333.4 612.4 335.7 608 338.4 603.7C341.4 599 344.9 594.2 348.8 589.7C352.8 585.1 357.4 580.7 362 576.6C366.5 572.6 371.1 569.1 376 565.2C381.4 561 387.1 556.4 393 552.5C399 548.5 405.7 544.9 412 541.5C418 538.3 423.8 535.2 430 532.5C436.3 529.7 442.9 527.3 449.5 525Z"/></clipPath>
<path d="M449.5 525C456.2 522.6 464.7 518.4 470 518.5C473.4 518.6 475.5 520.1 478.2 521.6C481.3 523.3 484.7 525.9 487.3 528.7C490 531.6 492.6 535.4 494 538.9C495.3 542.2 496.2 546 496 549.1C495.8 551.7 494.8 553.7 493.5 556.3C491.7 559.7 488 563.3 485.3 567.5C482.2 572.3 478.8 578.7 476.1 583.8C473.8 588.1 472.1 591.9 470 596C467.8 600.3 465.3 604.3 463.4 609C461.3 614.1 459.5 620.4 458 625.6C456.7 630.2 455.9 634 454.6 638.7C453.1 644.1 451.8 651.8 449.4 656.2C447.6 659.4 445.6 661.8 443 663.5C440.4 665.2 436.7 665.3 433.6 666.2C401.6 667.7 369.5 669.3 337.5 670.8C334.3 669.5 330.6 669.2 328 667C325.1 664.5 322.5 660 321.7 656C320.9 652 322.7 647.3 323.5 643C324.3 638.6 325.3 634.3 326.6 630C327.9 625.6 329.5 621.1 331.4 616.8C333.4 612.4 335.7 608 338.4 603.7C341.4 599 344.9 594.2 348.8 589.7C352.8 585.1 357.4 580.7 362 576.6C366.5 572.6 371.1 569.1 376 565.2C381.4 561 387.1 556.4 393 552.5C399 548.5 405.7 544.9 412 541.5C418 538.3 423.8 535.2 430 532.5C436.3 529.7 442.9 527.3 449.5 525Z" fill="#d8c2b6"/>
<g clip-path="url(#cq)"><path d="M500 520C495.7 522.5 492.2 524.9 487 527.5C479.7 531.1 468.5 534.8 460 539C451.9 543 444.3 547.5 437 552C430 556.3 423.2 560.8 417 565.5C411.2 569.9 405.9 574.2 401 579C396.2 583.7 391.9 588.8 388 594C384.1 599.1 381 604.7 377.5 610C383.1 607.6 389 604.5 394.3 602.8C398.9 601.3 403 600.3 407.4 599.8C411.7 599.3 416.2 598.9 420.5 599.8C425 600.7 429.4 602.9 433.6 605.5C438.2 608.4 442.7 613.2 446.7 616.8C450.2 619.9 453.2 622.7 456.4 625.6C477.6 630.4 498.8 635.2 520 640C520 600 520 560 520 520C513.3 520 506.7 520 500 520Z" fill="#fff"/>
<path d="M357.6 636C360.2 633.1 362.7 630.7 365.5 627.3C369 623.1 372.1 616.4 376.8 612.4C381.6 608.2 388.7 604.9 394.3 602.8C398.9 601.1 403 600.3 407.4 599.8C411.7 599.3 416.2 598.9 420.5 599.8C425 600.7 429.4 602.9 433.6 605.5C438.2 608.4 442.7 613.2 446.7 616.8C450.2 619.9 453.2 622.7 456.4 625.6C460.9 643.7 465.5 661.9 470 680C436 680 402 680 368 680C364.5 665.3 361.1 650.7 357.6 636Z" fill="#877c7d"/>
<path d="M366 629C386 637 402 648 417 666" fill="none" stroke="#4a4346" stroke-width="1.200"/></g>
<path d="M449.5 525C456.2 522.6 464.7 518.4 470 518.5C473.4 518.6 475.5 520.1 478.2 521.6C481.3 523.3 484.7 525.9 487.3 528.7C490 531.6 492.6 535.4 494 538.9C495.3 542.2 496.2 546 496 549.1C495.8 551.7 494.8 553.7 493.5 556.3C491.7 559.7 488 563.3 485.3 567.5C482.2 572.3 478.8 578.7 476.1 583.8C473.8 588.1 472.1 591.9 470 596C467.8 600.3 465.3 604.3 463.4 609C461.3 614.1 459.5 620.4 458 625.6C456.7 630.2 455.9 634 454.6 638.7C453.1 644.1 451.8 651.8 449.4 656.2C447.6 659.4 445.6 661.8 443 663.5C440.4 665.2 436.7 665.3 433.6 666.2C401.6 667.7 369.5 669.3 337.5 670.8C334.3 669.5 330.6 669.2 328 667C325.1 664.5 322.5 660 321.7 656C320.9 652 322.7 647.3 323.5 643C324.3 638.6 325.3 634.3 326.6 630C327.9 625.6 329.5 621.1 331.4 616.8C333.4 612.4 335.7 608 338.4 603.7C341.4 599 344.9 594.2 348.8 589.7C352.8 585.1 357.4 580.7 362 576.6C366.5 572.6 371.1 569.1 376 565.2C381.4 561 387.1 556.4 393 552.5C399 548.5 405.7 544.9 412 541.5C418 538.3 423.8 535.2 430 532.5C436.3 529.7 442.9 527.3 449.5 525Z" fill="none" stroke="#0a0a0a" stroke-width="3.500"/>
<path d="M497.5 665.5C494.5 662.1 490.5 658.7 488.4 655.3C486.7 652.6 485.7 650 485.3 647.1C484.9 644.2 485.5 641.4 486.3 637.9C487.4 633 490 626.3 492.4 620.6C494.8 614.8 497.8 608.1 500.6 603.3C502.8 599.6 504.7 597.5 507.3 594C510.9 589.2 515.6 583 520.3 577.5C525.3 571.7 531.1 565.1 536.5 560C541.3 555.4 545.9 551.7 551 548C556.1 544.3 560.8 541.1 566.9 537.9C574.3 534 583.3 529.9 592.3 526.7C601.9 523.3 612.6 520.6 622.9 518.5C633 516.4 643.7 515 653.5 514C662.4 513.1 671.6 512.5 679 512.4C684.7 512.3 689.8 511.9 694.3 512.9C698.1 513.8 701.8 515.3 704.5 517.5C707.1 519.6 709.3 522.3 710.6 525.7C712.2 529.8 711.7 534.7 712.1 541C712.8 551.3 713.3 567.6 713.7 581.8C714.2 597.2 714.4 619.6 714.7 630C714.9 635 715.3 637.2 715.2 641C715 645 715.2 649.8 713.7 653.2C712.4 656.1 710.1 658.8 707.6 660.4C705.3 662 702.1 662.1 699.4 663C632.1 663.8 564.8 664.7 497.5 665.5Z" fill="#d8c2b6" stroke="#0a0a0a" stroke-width="3.500" stroke-linejoin="round"/>
<path d="M526 650.1C522.1 650 521.1 650.6 518.9 649.6C516.3 648.5 513.4 645.6 511.8 643C510.2 640.4 509.6 637.1 509.3 633.8C508.9 629.9 509.4 625.3 510.3 621C511.3 616.4 513 611.6 515.5 607C518.3 601.9 522.1 597 526.5 592C531.5 586.2 538.3 579.8 544.4 574.6C550.1 569.7 555.7 565.6 561.8 561.4C568.2 557 574.9 552.9 582.2 549.1C590.1 545 599 541.1 607.6 537.9C616 534.7 624.5 532 633.1 529.8C641.5 527.6 650.5 525.9 658.6 524.7C665.8 523.6 673.7 522.6 679 522.6C682.3 522.6 684.8 522.6 687.2 523.6C689.6 524.6 691.9 526.5 693.3 528.7C694.8 530.9 695.2 533.2 695.8 536.9C697 544.4 696.5 559.1 696.9 571.6C697.3 586.4 698 607.6 698.2 620C698.3 627.8 699.4 634.4 698.4 638.9C697.8 641.6 696.9 643.6 695.3 645.1C693.8 646.5 692.7 646.9 689.2 647.6C671.7 651.2 544.8 650.6 526 650.1Z" fill="#fff" stroke="#d6d2d2" stroke-width="2"/>
<path d="M739.9 655C739.9 611.2 739.9 567.5 739.9 523.7C741.4 520.1 742.3 515.3 744.5 513C746.2 511.2 747.8 510.5 750.6 509.9C755.7 508.8 765.9 510.3 773.5 511.1C781.2 511.9 788.9 512.9 796.5 514.5C804.2 516.1 811.8 518.3 819.4 520.6C827.1 522.9 835.6 525.5 842.4 528.2C848.1 530.4 852.6 532.6 857.7 535.1C862.9 537.7 868 540.5 873 543.5C878.2 546.6 883.3 550 888.3 553.5C893.5 557.1 898.9 560.9 903.6 565C908 568.9 911.9 573.1 915.8 577.2C919.6 581.2 923.3 585.4 926.5 589.4C929.4 593 931.6 596.5 934.2 600.1C936.7 603.7 939.4 606.9 941.8 610.8C944.5 615 947.5 620.2 949.5 624.6C951.2 628.3 952.5 631.6 953.3 635.3C954.1 639.2 954.7 643.7 954 647.6C953.4 651.4 951.9 655.6 949.5 658.3C947.2 660.9 943.4 661.8 940.3 663.6C877.1 663.6 813.8 663.6 750.6 663.6C747.5 660.8 743.3 656.1 741.4 655.2C740.8 654.9 740.4 655.1 739.9 655Z" fill="#d8c2b6" stroke="#cfe4e4" stroke-width="2"/>
<path d="M743 646.8C743 607.2 743 567.6 743 528C743.7 526.5 743.8 524.4 745 523.5C746.5 522.4 749 522.5 752 522.5C757.2 522.5 765.8 523.7 773.5 525.2C782.9 527.1 794.1 529.7 804.1 533.6C814.5 537.7 825.4 543.9 834.7 549.7C843.1 555 850.9 561 857.7 566.5C863.5 571.2 868.4 575.4 873 580.3C877.5 585.1 881.6 590.4 885.2 595.6C888.7 600.6 891.8 605.8 894.4 610.8C896.8 615.4 899.2 620.2 900.5 624.6C901.6 628.3 902.6 632.1 902 635.3C901.4 638.2 899.7 641.1 897.5 643C895.2 645 891.4 645.5 888.3 646.8C839.9 646.8 791.4 646.8 743 646.8Z" fill="#fff"/>
<path d="M886 556C890.9 559.9 896.1 563.5 900.6 567.6C905 571.5 908.9 575.7 912.8 579.8C916.6 583.8 920.3 588 923.5 592C926.4 595.6 928.6 599.1 931.2 602.7C933.7 606.3 936.4 609.5 938.8 613.4C941.4 617.6 943.6 622.5 946 627" fill="none" stroke="#e6edef" stroke-width="2.600" opacity="0.9"/>
<path d="M876 582.500H913" fill="none" stroke="#efe6e0" stroke-width="1.500"/>
<clipPath id="cf"><path d="M739.9 655C739.9 611.2 739.9 567.5 739.9 523.7C741.4 520.1 742.3 515.3 744.5 513C746.2 511.2 747.8 510.5 750.6 509.9C755.7 508.8 765.9 510.3 773.5 511.1C781.2 511.9 788.9 512.9 796.5 514.5C804.2 516.1 811.8 518.3 819.4 520.6C827.1 522.9 835.6 525.5 842.4 528.2C848.1 530.4 852.6 532.6 857.7 535.1C862.9 537.7 868 540.5 873 543.5C878.2 546.6 883.3 550 888.3 553.5C893.5 557.1 898.9 560.9 903.6 565C908 568.9 911.9 573.1 915.8 577.2C919.6 581.2 923.3 585.4 926.5 589.4C929.4 593 931.6 596.5 934.2 600.1C936.7 603.7 939.4 606.9 941.8 610.8C944.5 615 947.5 620.2 949.5 624.6C951.2 628.3 952.5 631.6 953.3 635.3C954.1 639.2 954.7 643.7 954 647.6C953.4 651.4 951.9 655.6 949.5 658.3C947.2 660.9 943.4 661.8 940.3 663.6C877.1 663.6 813.8 663.6 750.6 663.6C747.5 660.8 743.3 656.1 741.4 655.2C740.8 654.9 740.4 655.1 739.9 655Z"/></clipPath>
<g clip-path="url(#cf)"><ellipse cx="859" cy="641" rx="46" ry="8.500" transform="rotate(-38 859 641)" fill="none" stroke="#505050" stroke-width="7"/></g>
<g fill="none" stroke="#0a2224" stroke-width="1.900">
<path d="M268 646C262 655.7 255.7 665.7 250 675C244.7 683.6 240.6 690.5 235 700C227.6 712.5 217.5 728.9 209.4 743.3C201.5 757.2 193.6 773.8 186.9 784.9C182.2 792.7 178.4 797.8 174.1 804.2"/>
<path d="M470.5 676.5C451 677.7 430.7 677.6 412 680C394.6 682.2 376.6 685.6 362 690C349.9 693.7 340.3 699 330 703.2C320.4 707.1 311.1 710.3 302.3 714.4C293.9 718.3 286.1 722.1 278.3 727.2C270 732.7 262 739.8 254.2 746.5C246.5 753.2 238.8 760 231.8 767.3C224.9 774.4 218.8 781.7 212.6 789.7C206 798.2 199.3 808 193.3 817C187.6 825.6 182.7 834.8 177.3 842.6C172.5 849.6 167.7 855.5 162.9 861.9"/>
<path d="M166 872C169.8 865.9 173.2 860.4 177.3 853.8C182.2 846 187.6 836.8 193.3 828.2C199.3 819.2 206.1 809.7 212.6 801C218.9 792.6 224.4 784.4 231.8 776.9C239.7 768.9 250.6 760.7 259 754.5C265.8 749.4 271.4 745.6 278.3 741.7C285.7 737.5 293.9 733.4 302.3 730.4C311.1 727.3 321.2 725.1 330 723.5C337.7 722.1 344.6 721.4 352 721C359.4 720.6 366.1 720 374.5 721C385.5 722.4 400.4 725.1 412 730.4C423.6 735.7 434.5 744.8 444.1 752.9C453 760.4 460.6 768.4 468.1 776.9C475.6 785.5 482.7 794.9 489 804.2C495 813.1 500.5 822 505 831.4C509.5 840.7 513.4 850.5 516.2 860.3C518.9 869.8 519.9 879.5 521.8 889.1"/>
<path d="M721.8 497.1C716 497.3 711.1 497.3 704.5 497.6C695.7 498 684.1 498.6 673.9 499.7C663.7 500.8 653.5 502.4 643.3 504.3C633.1 506.3 622.8 508.5 612.7 511.4C602.5 514.3 591.8 517.7 582.2 521.6C573.2 525.2 565.2 529.3 556.7 533.8C547.8 538.5 537.3 544.6 530 549.5C524.6 553.2 520.8 555.8 516.4 560C511.4 564.9 506.4 571.6 502 577.5C497.7 583.2 493.6 588.4 490.2 595C486.4 602.4 483.4 613 481 620C479.3 625 478.2 628.5 477 633C475.7 637.7 474.5 642.3 473.5 647.4C472.4 652.9 471.5 659.7 471 665C470.6 669.3 470.4 672.1 470.5 676.7C470.7 683.1 471 691.7 472.9 700C475.1 709.9 480.4 720.7 484.2 732C488.4 744.6 493 758.7 497 772.1C501 785.4 504.5 798.8 508.2 812.2C511.9 825.5 516.1 841 519.4 852.2C521.8 860.3 523.7 866.1 525.8 873"/>
<path d="M470.500 676.700L724.400 676.900L996 675.500" stroke-width="2.500"/>
<path d="M723 497L726 877"/>
<path d="M723 496.8C735.3 496.8 747.4 496.1 760 496.8C773.1 497.6 786.7 498.9 800 501.4C813.5 503.9 828.5 507.5 840.4 512C850.4 515.8 858.3 520.3 867 525.5C876.1 530.9 885.1 537.1 893.8 544C902.9 551.2 912.1 559.7 920.5 568C928.8 576.2 936.3 584.4 944 593.6C952.2 603.4 961.1 615.6 968 625C973.5 632.5 977.5 639.1 982.4 645.5C986.9 651.4 991.5 656.3 996 662C1000.7 667.8 1006.5 673.4 1010 680C1013.5 686.7 1015.2 693.6 1017 702C1019.3 712.8 1020.2 726.9 1021 740C1021.9 753.9 1021.8 765.9 1022 783C1022.3 808.3 1022 845.7 1022 877"/>
<path d="M1021 664L1038.500 687.500L1075.400 740L1113.400 793.700"/>
<path d="M1034.5 891.5C1036.3 889.5 1037.5 888.2 1040 885.5C1045.5 879.6 1058.5 866.5 1066.2 858C1072.6 851 1078.1 844.7 1083.3 838.3C1088 832.5 1092.6 827 1096.4 821.3C1099.9 816.1 1102.5 810.5 1105.5 805.5C1108.2 800.9 1110.6 797 1113.4 792.4C1116.6 787.1 1119.8 781 1123.9 775.4C1128.4 769.2 1133.8 762.3 1139.6 757C1145.2 751.9 1151.9 747.8 1158 743.9C1163.7 740.3 1169 737.3 1175 734.5C1181.3 731.6 1187.9 729.1 1195 727C1202.8 724.7 1211 722.1 1220 721.3C1230.1 720.4 1242.6 721.1 1252.8 722.6C1262.1 723.9 1271.1 726.1 1279 729.2C1286.2 732 1291.9 735.4 1298.6 739.7C1306.3 744.7 1314.3 751.9 1322.2 758"/>
</g>
<circle cx="499.600" cy="694.500" r="9.200" fill="#e6e6ec" stroke="#222" stroke-width="1"/>
<rect x="477.600" y="692.200" width="27" height="4.600" rx="2.300" fill="#d4d4d4" stroke="#222" stroke-width="0.900"/>
<circle cx="755" cy="694.800" r="9.300" fill="#efecf2" stroke="#14282a" stroke-width="1.600"/>
<path d="M738 695.200L746 692.200H764L767.500 695.200L764 697.600H746Z" fill="#1c2222"/>
<rect x="742" y="693.600" width="17" height="2.200" rx="1.100" fill="#ececec"/>
<circle cx="757" cy="694.900" r="2.300" fill="#fff"/>
<path d="M259 636L268 629.500L276 640L267 647Z" fill="#dcdcdc" stroke="#333" stroke-width="0.800"/>
<ellipse cx="251" cy="768" rx="10" ry="7" transform="rotate(-35 251 768)" fill="#dfe9ea"/>
<ellipse cx="248" cy="764" rx="8.500" ry="7.500" transform="rotate(-35 248 764)" fill="#050505"/>
<rect x="140.500" y="806" width="23" height="35" fill="#151010"/>
<rect x="142" y="808" width="10.500" height="19" fill="url(#gtail)"/>
<rect x="142.500" y="828.500" width="10" height="10" fill="#f08a28"/>
<path d="M163 806L172 808L164 840Z" fill="#f4f4f4" stroke="#333" stroke-width="0.800"/>
<path d="M123.500 870L139.500 842.500L158 841L144.500 860L158.500 871L157 907.500L123.500 902.500Z" fill="#e6e6e6" stroke="#222" stroke-width="1"/>
<path d="M126 872.500L149.500 875L148.500 898.500L124.500 896Z" fill="#0a0a0a"/>
<path d="M1308 724C1318 714 1338 706.500 1354 704.500L1364 707C1367.500 720 1367.500 738 1364.500 751L1355 754C1336 753 1316 744 1308.500 735C1306 731 1306 727 1308 724Z" fill="#419092" stroke="#0d2d2f" stroke-width="1.200"/>
<path d="M1362.500 707.500C1367 720 1367 738 1363 751.500" fill="none" stroke="#e8e8e8" stroke-width="3"/>
<rect x="1338.500" y="701.500" width="12.500" height="3.500" rx="1.500" fill="#e0e0e0" stroke="#333" stroke-width="0.600"/>
<path d="M1327 750L1338 753L1327 777L1319 772Z" fill="#1c1c1c"/>
<path d="M1383.500 800C1388 801 1392 804 1393.500 807.500C1395 820 1395 835 1391 860L1386 895L1366 896L1367 880L1363.500 860L1366 840L1376 815Z" fill="#f1f1f1" stroke="#222" stroke-width="1"/>
<path d="M1392 812C1395 830 1394 850 1389 866" fill="none" stroke="#111" stroke-width="2.500"/>
<path d="M1364 862C1372 858 1382 860 1388 866M1366 878C1374 876 1382 877 1388 880" fill="none" stroke="#666" stroke-width="0.800"/>
<path d="M946.300 614.600C949 613.500 952 614.200 954.500 615.200C958 616.200 960.500 617.200 962.600 618.600C965.500 620.600 968 623 969.600 625.600C971 628 972 630 972 632.600L970.800 655.400C968 655 965 654 962.600 652.400C959 650.500 956 648.500 953.300 646C950.500 643.500 948.300 640.500 946.900 637.300C945.600 634.300 944.800 631 944.600 628C944.500 624.500 944.900 621.500 945.700 618.600Z" fill="#dedede" stroke="#0c0c0c" stroke-width="2"/>
<path d="M950 620C955 619 962 622 966 628C968 634 967 644 966 650C960 648 953 642 950 634C948.500 629 948.800 624 950 620Z" fill="#ececec" opacity="0.7"/>
<path d="M966.100 634.200L983.400 636.600L975.600 649.500L972.800 648.200L978.500 639.200L965.800 637.400Z" fill="#fff" stroke="#0c0c0c" stroke-width="1.600" stroke-linejoin="round"/>
<rect x="972" y="649.500" width="4.600" height="12.300" rx="2" fill="#f4f4f4" stroke="#0c0c0c" stroke-width="1.400"/>
</svg>
<svg id="plots" viewBox="1800 260 900 1300" width="900" height="1300" font-family='"Liberation Sans", sans-serif'>
<rect x="1874.05" y="289.1" width="799.85" height="480.8" fill="#ebebeb"/>
<path d="M2008.41 289.1V769.9M2148.23 289.1V769.9M2288.05 289.1V769.9M2427.87 289.1V769.9M2567.69 289.1V769.9M1874.05 707.08H2673.9M1874.05 570.49H2673.9M1874.05 433.9H2673.9M1874.05 297.31H2673.9" stroke="#fff" stroke-width="0.8" fill="none"/>
<path d="M1938.5 289.1V769.9M2078.32 289.1V769.9M2218.14 289.1V769.9M2357.96 289.1V769.9M2497.78 289.1V769.9M2637.6 289.1V769.9M1874.05 638.78H2673.9M1874.05 502.19H2673.9M1874.05 365.6H2673.9" stroke="#fff" stroke-width="1.6" fill="none"/>
<path d="M1938.5 769.9v4.1M2078.32 769.9v4.1M2218.14 769.9v4.1M2357.96 769.9v4.1M2497.78 769.9v4.1M2637.6 769.9v4.1M1874.05 638.78h-4.1M1874.05 502.19h-4.1M1874.05 365.6h-4.1" stroke="#333" stroke-width="1.6" fill="none"/>
<g fill="#000">
<circle cx="1910.54" cy="748.05" r="3.25"/>
<circle cx="1966.46" cy="720.73" r="3.25"/>
<circle cx="1966.46" cy="707.08" r="3.25"/>
<circle cx="1966.46" cy="693.42" r="3.25"/>
<circle cx="1966.46" cy="679.76" r="3.25"/>
<circle cx="1994.43" cy="693.42" r="3.25"/>
<circle cx="1994.43" cy="679.76" r="3.25"/>
<circle cx="1994.43" cy="666.1" r="3.25"/>
<circle cx="2022.39" cy="693.42" r="3.25"/>
<circle cx="2022.39" cy="679.76" r="3.25"/>
<circle cx="2022.39" cy="666.1" r="3.25"/>
<circle cx="2022.39" cy="652.44" r="3.25"/>
<circle cx="2050.36" cy="679.76" r="3.25"/>
<circle cx="2050.36" cy="666.1" r="3.25"/>
<circle cx="2050.36" cy="652.44" r="3.25"/>
<circle cx="2050.36" cy="638.78" r="3.25"/>
<circle cx="2078.32" cy="679.76" r="3.25"/>
<circle cx="2078.32" cy="666.1" r="3.25"/>
<circle cx="2078.32" cy="652.44" r="3.25"/>
<circle cx="2078.32" cy="638.78" r="3.25"/>
<circle cx="2078.32" cy="625.12" r="3.25"/>
<circle cx="2078.32" cy="611.46" r="3.25"/>
<circle cx="2078.32" cy="597.8" r="3.25"/>
<circle cx="2078.32" cy="584.14" r="3.25"/>
<circle cx="2078.32" cy="570.49" r="3.25"/>
<circle cx="2106.28" cy="638.78" r="3.25"/>
<circle cx="2106.28" cy="611.46" r="3.25"/>
<circle cx="2106.28" cy="597.8" r="3.25"/>
<circle cx="2106.28" cy="584.14" r="3.25"/>
<circle cx="2106.28" cy="570.49" r="3.25"/>
<circle cx="2106.28" cy="556.83" r="3.25"/>
<circle cx="2134.25" cy="611.46" r="3.25"/>
<circle cx="2134.25" cy="584.14" r="3.25"/>
<circle cx="2134.25" cy="570.49" r="3.25"/>
<circle cx="2134.25" cy="556.83" r="3.25"/>
<circle cx="2134.25" cy="543.17" r="3.25"/>
<circle cx="2162.21" cy="597.8" r="3.25"/>
<circle cx="2162.21" cy="584.14" r="3.25"/>
<circle cx="2162.21" cy="570.49" r="3.25"/>
<circle cx="2162.21" cy="556.83" r="3.25"/>
<circle cx="2162.21" cy="543.17" r="3.25"/>
<circle cx="2162.21" cy="529.51" r="3.25"/>
<circle cx="2162.21" cy="515.85" r="3.25"/>
<circle cx="2190.18" cy="570.49" r="3.25"/>
<circle cx="2190.18" cy="556.83" r="3.25"/>
<circle cx="2190.18" cy="543.17" r="3.25"/>
<circle cx="2190.18" cy="529.51" r="3.25"/>
<circle cx="2190.18" cy="515.85" r="3.25"/>
<circle cx="2218.14" cy="570.49" r="3.25"/>
<circle cx="2218.14" cy="556.83" r="3.25"/>
<circle cx="2218.14" cy="543.17" r="3.25"/>
<circle cx="2218.14" cy="529.51" r="3.25"/>
<circle cx="2218.14" cy="515.85" r="3.25"/>
<circle cx="2218.14" cy="488.53" r="3.25"/>
<circle cx="2246.1" cy="556.83" r="3.25"/>
<circle cx="2246.1" cy="543.17" r="3.25"/>
<circle cx="2246.1" cy="515.85" r="3.25"/>
<circle cx="2246.1" cy="502.19" r="3.25"/>
<circle cx="2246.1" cy="488.53" r="3.25"/>
<circle cx="2274.07" cy="515.85" r="3.25"/>
<circle cx="2274.07" cy="502.19" r="3.25"/>
<circle cx="2274.07" cy="488.53" r="3.25"/>
<circle cx="2302.03" cy="515.85" r="3.25"/>
<circle cx="2302.03" cy="488.53" r="3.25"/>
<circle cx="2302.03" cy="474.87" r="3.25"/>
<circle cx="2330" cy="502.19" r="3.25"/>
<circle cx="2330" cy="474.87" r="3.25"/>
<circle cx="2330" cy="461.21" r="3.25"/>
<circle cx="2330" cy="420.24" r="3.25"/>
<circle cx="2357.96" cy="474.87" r="3.25"/>
<circle cx="2357.96" cy="420.24" r="3.25"/>
<circle cx="2385.92" cy="447.55" r="3.25"/>
<circle cx="2385.92" cy="433.9" r="3.25"/>
<circle cx="2441.85" cy="461.21" r="3.25"/>
<circle cx="2441.85" cy="406.58" r="3.25"/>
<circle cx="2469.82" cy="351.94" r="3.25"/>
<circle cx="2581.67" cy="310.96" r="3.25"/>
<circle cx="2637.6" cy="310.96" r="3.25"/>
</g>
<g font-size="13.1" fill="#4d4d4d" text-anchor="middle">
<text x="1938.5" y="786.9">10</text>
<text x="2078.32" y="786.9">15</text>
<text x="2218.14" y="786.9">20</text>
<text x="2357.96" y="786.9">25</text>
<text x="2497.78" y="786.9">30</text>
<text x="2637.6" y="786.9">35</text>
</g>
<g font-size="13.1" fill="#4d4d4d" text-anchor="end">
<text x="1866.85" y="642.98">20</text>
<text x="1866.85" y="506.39">30</text>
<text x="1866.85" y="369.8">40</text>
</g>
<text x="2273.97" y="805.9" font-size="16.4" fill="#000" text-anchor="middle">cty</text>
<text transform="translate(1845 529.5) rotate(-90)" font-size="16.4" fill="#000" text-anchor="middle">hwy</text>
<rect x="1881.5" y="1018.2" width="792.35" height="480.57" fill="#ebebeb"/>
<path d="M1881.5 1425.64H2673.85M1881.5 1322.51H2673.85M1881.5 1219.39H2673.85M1881.5 1116.26H2673.85" stroke="#fff" stroke-width="0.8" fill="none"/>
<path d="M2030.07 1018.2V1498.77M2277.67 1018.2V1498.77M2525.28 1018.2V1498.77M1881.5 1477.2H2673.85M1881.5 1374.08H2673.85M1881.5 1270.95H2673.85M1881.5 1167.83H2673.85M1881.5 1064.7H2673.85" stroke="#fff" stroke-width="1.6" fill="none"/>
<rect x="1918.64" y="1052.33" width="222.85" height="424.88" fill="#595959"/>
<rect x="2166.25" y="1039.95" width="222.85" height="437.25" fill="#595959"/>
<rect x="2413.86" y="1374.08" width="222.85" height="103.12" fill="#595959"/>
<path d="M2030.07 1498.77v4.1M2277.67 1498.77v4.1M2525.28 1498.77v4.1M1881.5 1477.2h-4.1M1881.5 1374.08h-4.1M1881.5 1270.95h-4.1M1881.5 1167.83h-4.1M1881.5 1064.7h-4.1" stroke="#333" stroke-width="1.6" fill="none"/>
<g font-size="13.1" fill="#4d4d4d" text-anchor="middle">
<text x="2030.07" y="1515.77">4</text>
<text x="2277.67" y="1515.77">f</text>
<text x="2525.28" y="1515.77">r</text>
</g>
<g font-size="13.1" fill="#4d4d4d" text-anchor="end">
<text x="1874.3" y="1481.4">0</text>
<text x="1874.3" y="1378.28">25</text>
<text x="1874.3" y="1275.15">50</text>
<text x="1874.3" y="1172.03">75</text>
<text x="1874.3" y="1068.9">100</text>
</g>
<text x="2277.68" y="1534.77" font-size="16.4" fill="#000" text-anchor="middle">drv</text>
<text transform="translate(1845 1258.49) rotate(-90)" font-size="16.4" fill="#000" text-anchor="middle">count</text>
</svg>
<div id="expand"><svg viewBox="0 0 64.5 65.8" width="64.5" height="65.8"><path d="M34.550 24.100H43.050V32.900M22.450 36.100V44.200H31.850" fill="none" stroke="#444" stroke-width="2.100" stroke-linecap="round" stroke-linejoin="round"/></svg></div>
<div id="shadow"></div>
</main>
</body>
</html>
